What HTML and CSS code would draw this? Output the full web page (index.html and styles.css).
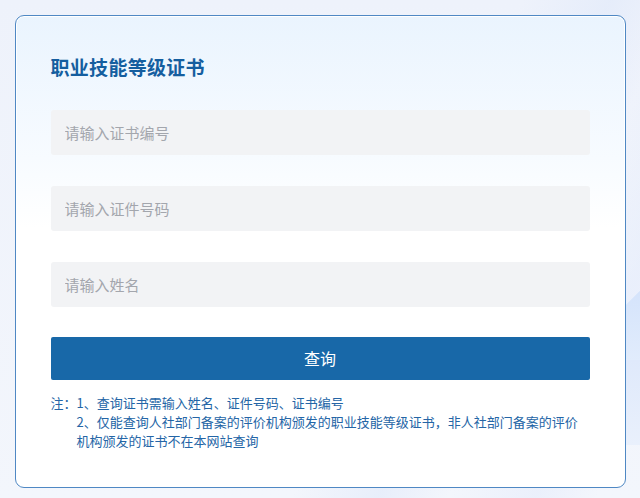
FILE: index.html
```html
<!DOCTYPE html>
<html lang="zh-CN">
<head>
<meta charset="utf-8">
<title>职业技能等级证书</title>
<link rel="stylesheet" href="styles.css">
</head>
<body>
<div class="page">
  <div class="deco deco-a"></div>
  <div class="deco deco-b"></div>
  <div class="card">
    <h1 class="title">职业技能等级证书</h1>
    <form class="form">
      <input class="field" type="text" placeholder="请输入证书编号">
      <input class="field" type="text" placeholder="请输入证件号码">
      <input class="field field-last" type="text" placeholder="请输入姓名">
      <button class="btn" type="button">查询</button>
    </form>
    <div class="notes">
      <span class="notes-label">注：</span>
      <div class="notes-list">
        <p>1、查询证书需输入姓名、证件号码、证书编号</p>
        <p>2、仅能查询人社部门备案的评价机构颁发的职业技能等级证书，非人社部门备案的评价机构颁发的证书不在本网站查询</p>
      </div>
    </div>
  </div>
</div>
</body>
</html>
```

FILE: styles.css
```css
* { box-sizing: border-box; }
html, body { margin: 0; padding: 0; }
body {
  font-family: "Noto Sans CJK SC", "Noto Sans", sans-serif;
  background: #f2f5fc;
  width: 640px;
  height: 498px;
  overflow: hidden;
}
.page {
  position: relative;
  width: 640px;
  height: 498px;
  overflow: hidden;
  padding: 15px 15px 11px 15px;
  background:
    linear-gradient(115deg, rgba(255,255,255,0) 60%, rgba(224,233,250,0.6) 70%, rgba(255,255,255,0) 78%, rgba(226,234,251,0.5) 88%, rgba(255,255,255,0) 95%),
    linear-gradient(180deg, #eef2fb 0%, #f3f6fc 100%);
}
.deco {
  position: absolute;
  pointer-events: none;
}
.deco-a {
  right: -36px;
  top: 300px;
  width: 64px;
  height: 64px;
  transform: rotate(45deg);
  background: linear-gradient(135deg, #d4e3fb, #e4eefc);
}
.deco-b {
  right: 0;
  top: 360px;
  width: 16px;
  height: 85px;
  background: linear-gradient(180deg, #dfe9fb, #e9f0fc);
}
.card {
  position: relative;
  width: 611px;
  height: 473px;
  border: 1.5px solid #4f88c4;
  border-radius: 9px;
  box-shadow: inset 0 0 0 1px #ffffff;
  background: linear-gradient(180deg, #eaf4fe 0%, #f7fbff 30%, #ffffff 45%, #ffffff 100%);
  padding: 37.5px 34px 0 34.5px;
}
.title {
  margin: 0;
  font-size: 19px;
  line-height: 26px;
  font-weight: 700;
  color: #155e9f;
  letter-spacing: 0.3px;
}
.form {
  display: flex;
  flex-direction: column;
  margin-top: 30px;
}
.field {
  display: block;
  width: 539px;
  height: 45px;
  border: none;
  border-radius: 3px;
  background: #f2f3f5;
  padding: 0 14px;
  font-family: inherit;
  font-size: 15px;
  color: #333;
  outline: none;
  margin-bottom: 31px;
}
.field::placeholder { color: #a3a6ad; }
.field-last { margin-bottom: 30px; }
.btn {
  display: block;
  width: 539px;
  height: 43px;
  border: none;
  border-radius: 2px;
  background: #1868a8;
  color: #ffffff;
  font-family: inherit;
  font-size: 16px;
  cursor: pointer;
}
.notes {
  display: flex;
  margin-top: 13px;
  font-size: 13px;
  line-height: 19px;
  color: #2465a6;
}
.notes-label { flex: none; width: 26px; }
.notes-list { width: 508px; }
.notes-list p { margin: 0; }
```
